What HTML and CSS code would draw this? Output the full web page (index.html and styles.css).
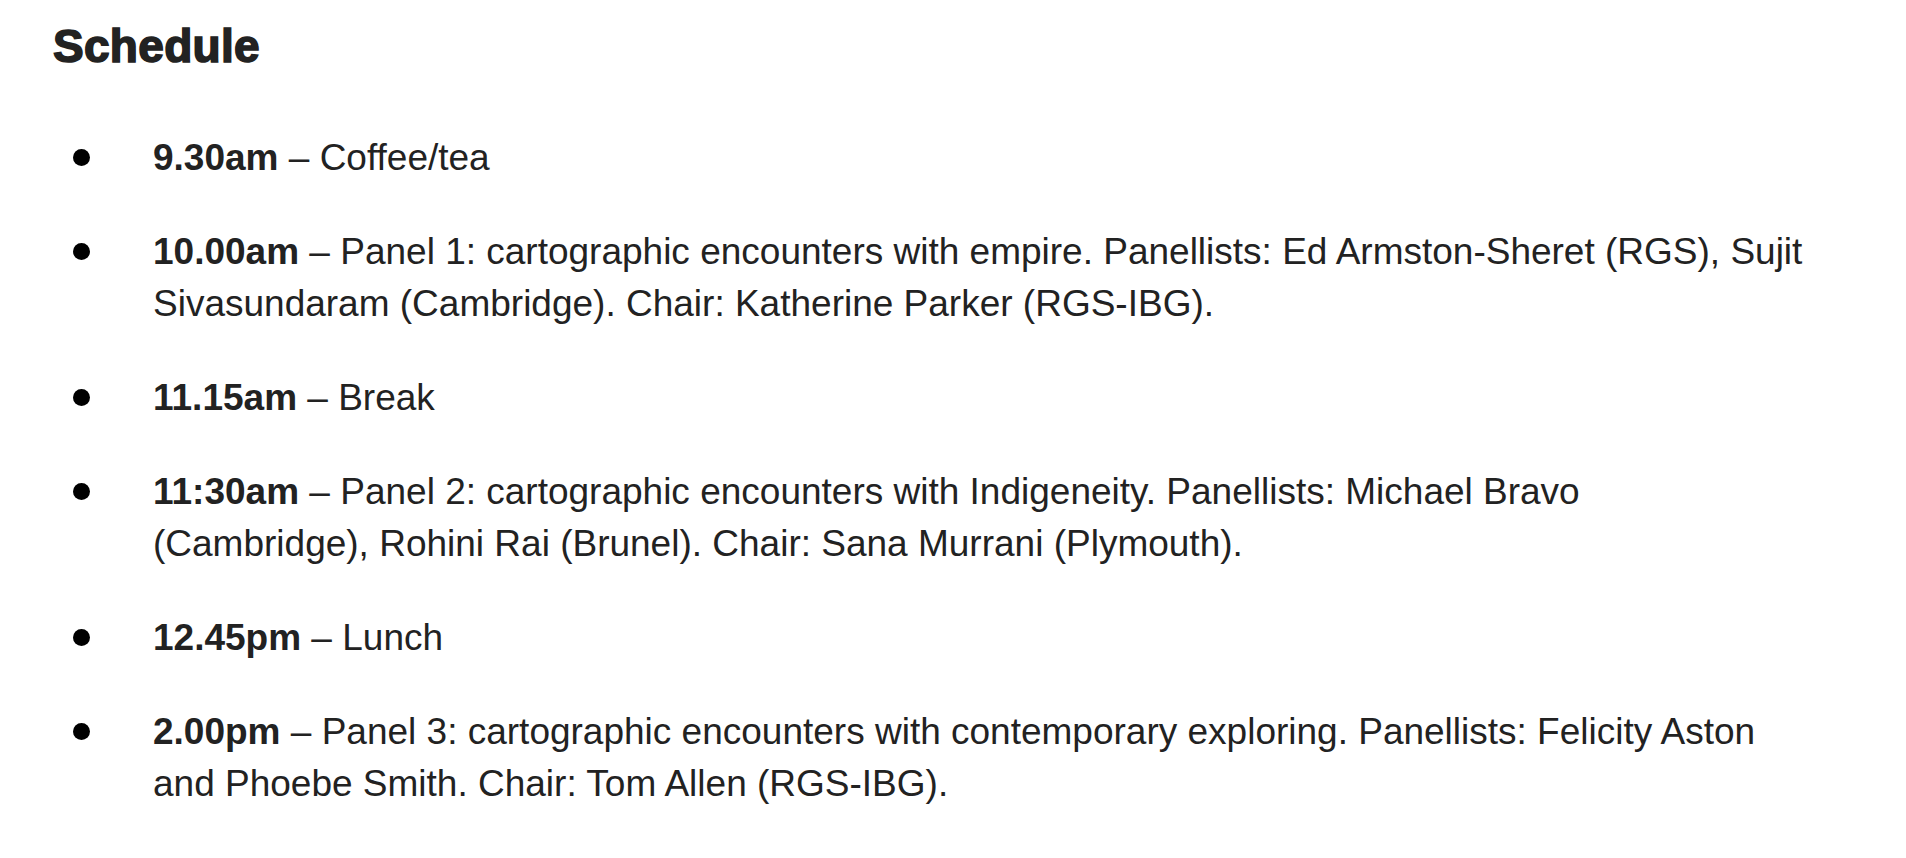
FILE: index.html
```html
<!DOCTYPE html>
<html lang="en">
<head>
<meta charset="utf-8">
<title>Schedule</title>
<link rel="stylesheet" href="styles.css">
</head>
<body>
<main class="page">
  <h2 class="title">Schedule</h2>
  <ul class="schedule">
    <li class="item"><div class="text"><strong>9.30am</strong> – Coffee/tea</div></li>
    <li class="item"><div class="text"><strong>10.00am</strong> – Panel 1: cartographic encounters with empire. Panellists: Ed Armston-Sheret (RGS), Sujit Sivasundaram (Cambridge). Chair: Katherine Parker (RGS-IBG).</div></li>
    <li class="item"><div class="text"><strong>11.15am</strong> – Break</div></li>
    <li class="item"><div class="text"><strong>11:30am</strong> – Panel 2: cartographic encounters with Indigeneity. Panellists: Michael Bravo (Cambridge), Rohini Rai (Brunel). Chair: Sana Murrani (Plymouth).</div></li>
    <li class="item"><div class="text"><strong>12.45pm</strong> – Lunch</div></li>
    <li class="item"><div class="text"><strong>2.00pm</strong> – Panel 3: cartographic encounters with contemporary exploring. Panellists: Felicity Aston and Phoebe Smith. Chair: Tom Allen (RGS-IBG).</div></li>
  </ul>
</main>
</body>
</html>
```
FILE: styles.css
```css
html, body {
  margin: 0;
  padding: 0;
  background: #ffffff;
}

body {
  font-family: "Liberation Sans", Arial, sans-serif;
  color: #222222;
}

.page {
  padding: 18px 101px 0 53px;
}

.title {
  margin: 0;
  font-size: 46px;
  line-height: 56px;
  font-weight: 700;
  letter-spacing: 0.3px;
  -webkit-text-stroke: 1.6px #222222;
  color: #222222;
}

.schedule {
  list-style: none;
  margin: 58px 0 0 0;
  padding: 0;
  display: flex;
  flex-direction: column;
  gap: 42px;
}

.item {
  display: flex;
  align-items: flex-start;
  font-size: 37px;
  line-height: 52px;
}

.item::before {
  content: "";
  flex: 0 0 17px;
  width: 17px;
  height: 17px;
  margin: 17px 63px 0 20px;
  border-radius: 50%;
  background: #000000;
}

.text {
  flex: 1 1 auto;
  min-width: 0;
}

.text strong {
  font-weight: 700;
}
```
